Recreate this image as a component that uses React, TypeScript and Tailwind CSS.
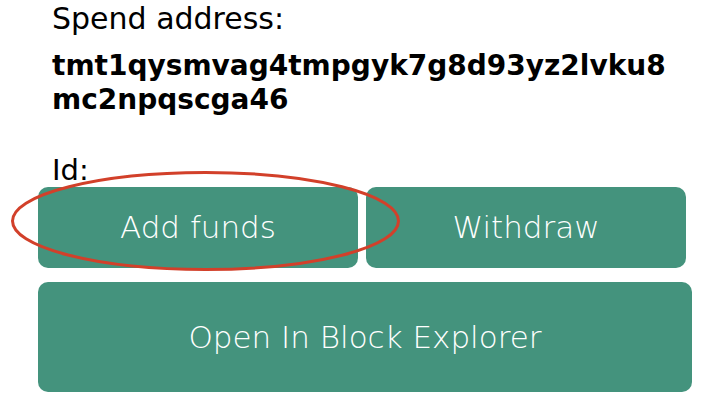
export default function App() {
  return (
    <div className="relative w-[720px] h-[413px] overflow-hidden bg-white text-black font-['DejaVu_Sans',sans-serif]">
      <div className="pl-[52px] pr-[40px] pt-[1px]">
        <div className="text-[30px] leading-[36px]">Spend address:</div>
        <div className="mt-[12px] text-[28px] leading-[34px] font-bold break-all">
          tmt1qysmvag4tmpgyk7g8d93yz2lvku8mc2npqscga46
        </div>
        <div className="mt-[38px] text-[29px] leading-[30px]">Id:</div>
      </div>
      <div className="mt-[2px] pl-[38px] pr-[28px]">
        <div className="flex gap-2 pr-[6px]">
          <button className="h-[81px] w-[320px] rounded-[10px] bg-[#44937d] text-[31px] font-extralight text-white">
            Add funds
          </button>
          <button className="h-[81px] w-[320px] rounded-[10px] bg-[#44937d] text-[31px] font-extralight text-white">
            Withdraw
          </button>
        </div>
        <button className="mt-[14px] h-[110px] w-[654px] rounded-[10px] bg-[#44937d] text-[31px] font-extralight text-white">
          Open In Block Explorer
        </button>
      </div>
      <svg className="absolute left-0 top-0 pointer-events-none" width="720" height="413">
        <ellipse cx="205.5" cy="221" rx="193" ry="48.5" fill="none" stroke="#d2402a" strokeWidth="3" />
      </svg>
    </div>
  )
}
